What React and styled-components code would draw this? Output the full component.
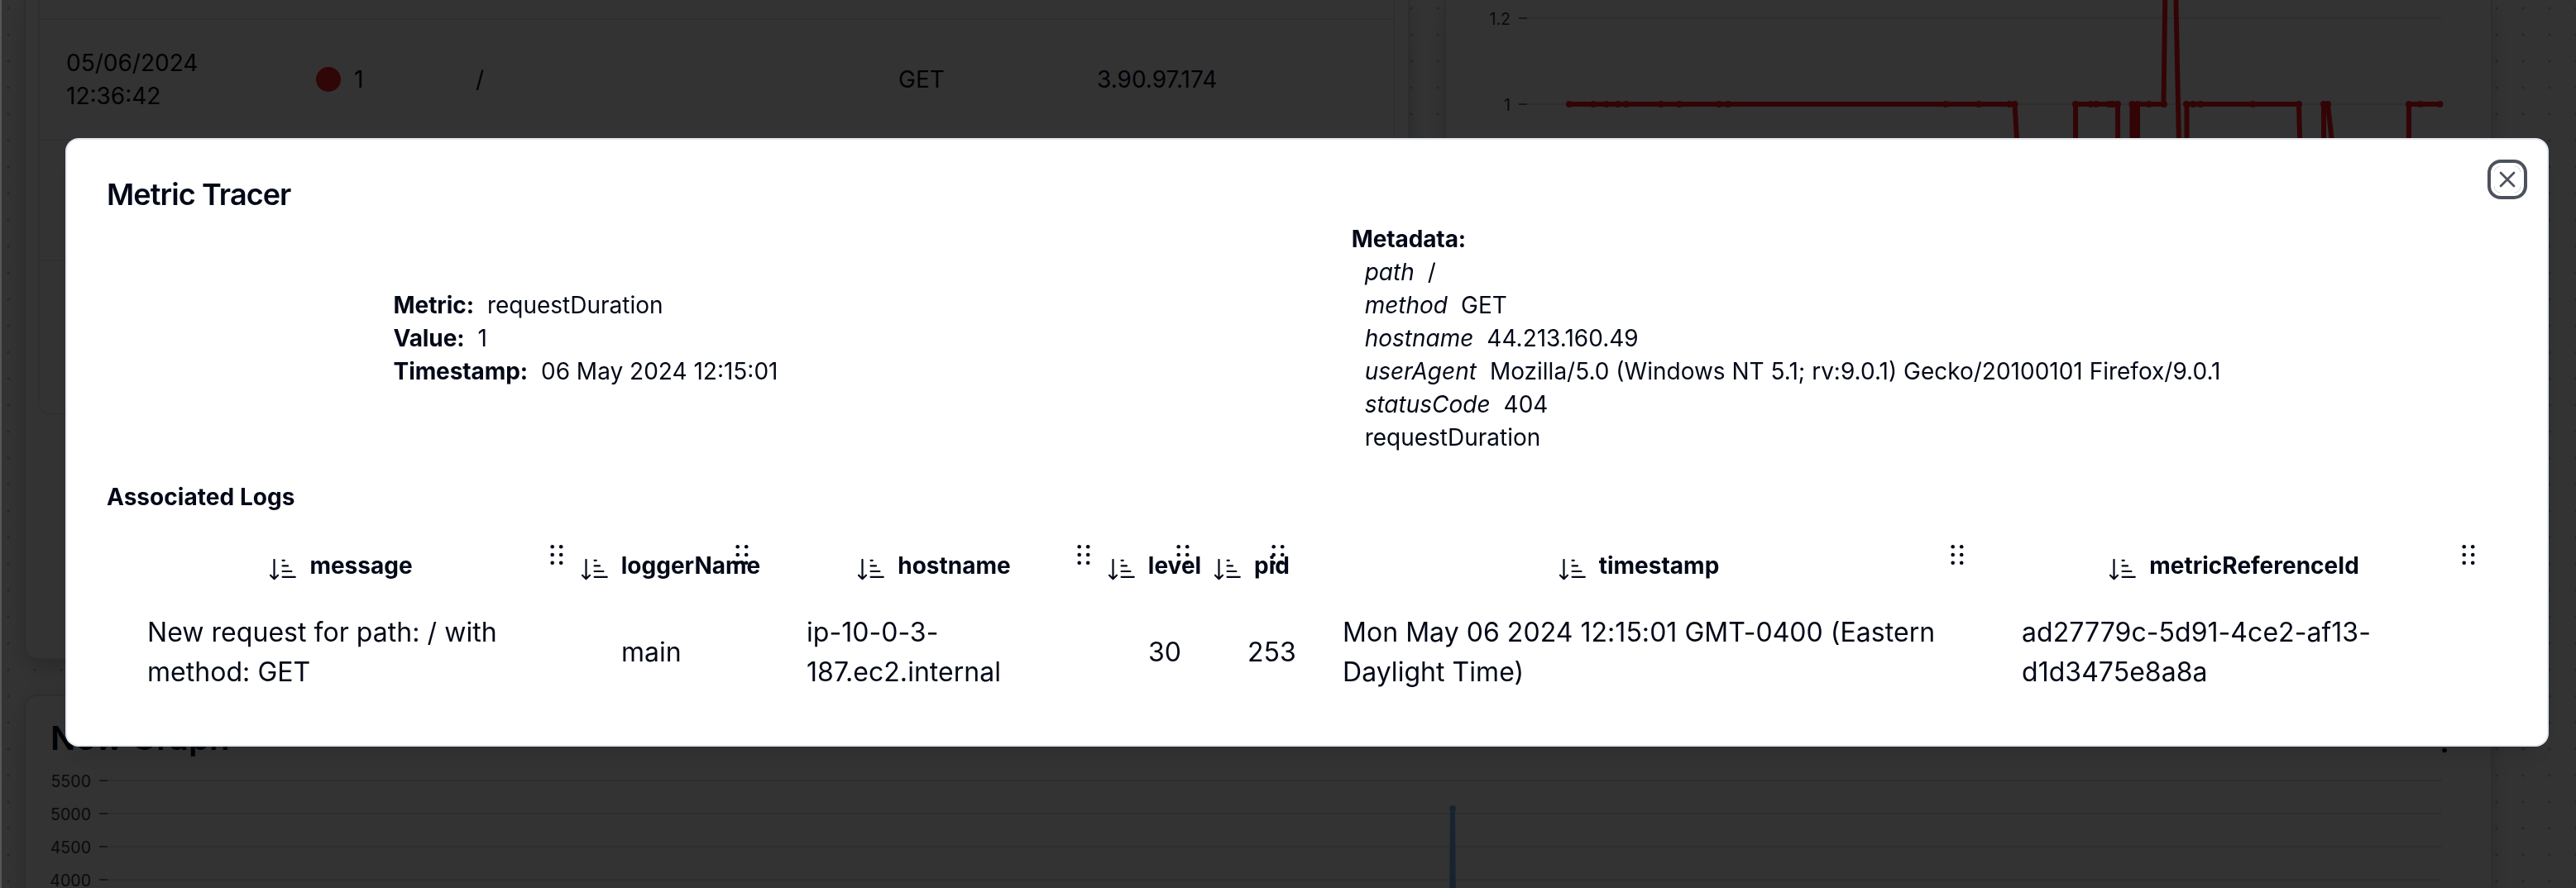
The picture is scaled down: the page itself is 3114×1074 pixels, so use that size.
import React from "react";
import styled, { createGlobalStyle } from "styled-components";

const GlobalStyle = createGlobalStyle`
  *, *::before, *::after { box-sizing: border-box; }
  body {
    margin: 0;
    font-family: Inter, "Liberation Sans", sans-serif;
    color: #020817;
    background: #fff;
    overflow: hidden;
  }
`;

/* ---------- dashboard behind the dialog ---------- */

const Dashboard = styled.main`
  width: 3114px;
  height: 1074px;
  overflow: hidden;
  padding-left: 29px;
  display: flex;
  flex-direction: column;
  gap: 42px;
  background-color: #fff;
  background-image: radial-gradient(circle at 10px 10px, #c4c4c4 1.1px, transparent 2px);
  background-size: 32px 32px;
`;

const WidgetRow = styled.div`
  display: flex;
  gap: 42px;
`;

const Card = styled.section`
  flex: none;
  width: ${(p) => p.$width}px;
  height: ${(p) => p.$height}px;
  background: #fff;
  border: 2px solid #dcdee2;
  border-top-width: ${(p) => (p.$cut ? 0 : 2)}px;
  border-radius: ${(p) => (p.$cut ? "0 0 16px 16px" : "16px")};
  box-shadow: 0 20px 30px -6px rgba(0, 0, 0, 0.14), 0 0 24px rgba(0, 0, 0, 0.1);
  overflow: hidden;
`;

const RequestTable = styled.div`
  margin: 0 16px 0 15px;
  height: 502px;
  border: 2px solid #e9ebee;
  border-top: 0;
  border-radius: 0 0 16px 16px;
`;

const RequestRow = styled.div`
  height: ${(p) => p.$height}px;
  border-bottom: 2px solid #e9ebee;
  display: grid;
  grid-template-columns: 302px 193px 511px 240px 1fr;
  align-items: center;
  font-size: 28px;
  line-height: 40px;
`;

const RequestCell = styled.div`
  padding: 0 32px;
  display: flex;
  align-items: center;
  gap: 16px;
`;

const DateText = styled.span`
  width: 170px;
`;

const StatusDot = styled.span`
  width: 30px;
  height: 30px;
  border-radius: 50%;
  background: #f01e24;
`;

const GraphHeader = styled.header`
  display: flex;
  justify-content: space-between;
  align-items: center;
  padding: 27px 52px 0 30px;
  height: 96px;
`;

const GraphTitle = styled.h2`
  margin: -21px 0 0;
  font-size: 40px;
  line-height: 48px;
  font-weight: 600;
  letter-spacing: 0.2px;
`;

const Chart = styled.svg`
  display: block;
  overflow: visible;
  font-family: Inter, sans-serif;
  font-size: 19.6px;
`;

/* ---------- dialog ---------- */

const Overlay = styled.div`
  position: fixed;
  inset: 0 0 0 2px;
  background: rgba(0, 0, 0, 0.8);
  padding: 167px 0 0 77px;
`;

const Edge = styled.div`
  position: fixed;
  inset: 0 auto 0 0;
  width: 2px;
  background: #565656;
`;

const Dialog = styled.div`
  position: relative;
  width: 3002px;
  height: 736px;
  padding: 48px;
  background: #fff;
  border: 2px solid #e2e8f0;
  border-radius: 16px;
  box-shadow: 0 20px 30px -6px rgba(0, 0, 0, 0.1), 0 8px 12px -8px rgba(0, 0, 0, 0.1);
`;

const CloseButton = styled.button`
  position: absolute;
  top: 32px;
  right: 32px;
  width: 32px;
  height: 32px;
  padding: 0;
  border: 0;
  border-radius: 8px;
  background: transparent;
  color: #020817;
  opacity: 0.7;
  box-shadow: 0 0 0 4px #fff, 0 0 0 8px #020817;

  svg { display: block; }
`;

const Title = styled.h1`
  margin: 0 0 16px;
  font-size: 36px;
  line-height: 36px;
  font-weight: 600;
  letter-spacing: -0.025em;
`;

const Details = styled.div`
  display: flex;
  justify-content: space-around;
  align-items: center;
  font-size: 28px;
  line-height: 40px;
`;

const Line = styled.div`
  display: flex;
  gap: 16px;
  padding-left: ${(p) => (p.$indent ? 16 : 0)}px;
  white-space: nowrap;
`;

const Label = styled.span`
  font-weight: 700;
  letter-spacing: -0.1px;
`;

const MetaKey = styled.em`
  font-style: italic;
`;

const SectionTitle = styled.div`
  margin: 32px 0 16px;
  font-size: 28px;
  line-height: 40px;
  font-weight: 700;
  letter-spacing: 0.05px;
`;

const LogGrid = styled.div`
  display: grid;
  grid-template-columns: 573px 224px 413px 120px 115px 821px 618px;
`;

const HeadCell = styled.div`
  position: relative;
  height: 88px;
  padding: 5px 6px 0 0;
  display: flex;
  align-items: center;
  justify-content: center;
  gap: 16px;
  font-size: 28px;
  line-height: 40px;
  font-weight: 700;
  white-space: nowrap;
`;

const SortGlyph = styled.svg`
  flex: none;
  margin-top: 10px;
`;

const Grip = styled.svg`
  position: absolute;
  top: 20px;
  right: 21px;
`;

const LogCell = styled.div`
  height: 128px;
  padding: 0 47px 0 49px;
  display: flex;
  align-items: center;
  font-size: 32px;
  line-height: 48px;
  letter-spacing: 0.04px;
`;

const SortIcon = () => (
  <SortGlyph width="32" height="26" viewBox="0 0 32 26" fill="none" stroke="currentColor" strokeWidth="2.2" strokeLinecap="round" strokeLinejoin="round">
    <path d="M5.5 1v23M1 19.7l4.5 4.5 4.5-4.5M15.6 1.8h2.2M15.6 8.4h6.4M15.6 15h10.8M15.6 21.8h15.2" />
  </SortGlyph>
);

const GripDots = () => (
  <Grip width="16" height="26" viewBox="0 0 16 26" fill="currentColor">
    {[4.3, 14, 23.7].map((y) => (
      <g key={y}>
        <circle cx="2.7" cy={y} r="2.3" />
        <circle cx="13.2" cy={y} r="2.3" />
      </g>
    ))}
  </Grip>
);

const columns = [
  ["message", "New request for path: / with method: GET"],
  ["loggerName", "main"],
  ["hostname", "ip-10-0-3-187.ec2.internal"],
  ["level", "30"],
  ["pid", "253"],
  ["timestamp", "Mon May 06 2024 12:15:01 GMT-0400 (Eastern Daylight Time)"],
  ["metricReferenceId", "ad27779c-5d91-4ce2-af13-d1d3475e8a8a"],
];

const metadata = [
  ["path", "/"],
  ["method", "GET"],
  ["hostname", "44.213.160.49"],
  ["userAgent", "Mozilla/5.0 (Windows NT 5.1; rv:9.0.1) Gecko/20100101 Firefox/9.0.1"],
  ["statusCode", "404"],
];

const markers = [
  1897, 1926, 1942, 1956, 1966, 2008, 2030, 2078, 2089, 2352, 2392, 2429, 2435.5,
  2509, 2527, 2534, 2549.5, 2554, 2560, 2577.5, 2584, 2598, 2616, 2643, 2651, 2660,
  2723, 2779, 2809, 2814, 2912, 2926, 2949.5,
];

const StatusChart = () => (
  <Chart width="1263" height="200" viewBox="1748 0 1263 200">
    {[["1.2", 22], ["1", 126]].map(([label, y]) => (
      <g key={label}>
        <line x1="1846" x2="2952" y1={y} y2={y} stroke="#e3e3e3" strokeWidth="2" />
        <line x1="1836" x2="1846" y1={y} y2={y} stroke="#777" strokeWidth="2" />
        <text x="1826" y={y + 7.5} textAnchor="end" fill="#333">{label}</text>
      </g>
    ))}
    <path
      d="M1897 126H2435.5L2447 320M2509 320V126H2560L2560.5 320M2577 320L2577.5 126H2583L2580 320M2584 320V126H2615.5L2617.5-20M2630-20L2637 320M2643.5 320V126H2779L2784 320M2809 320V126H2814L2835 320M2912 320V126H2949.5"
      fill="none"
      stroke="#ff1822"
      strokeWidth="6"
    />
    {markers.map((x) => <circle key={x} cx={x} cy="126" r="4" fill="#ff1822" />)}
  </Chart>
);

const NewGraphChart = () => (
  <Chart width="2980" height="136" viewBox="31 938 2980 136">
    {[5500, 5000, 4500, 4000].map((value, i) => {
      const y = 944 + i * 40;
      return (
        <g key={value}>
          <line x1="130" x2="2952" y1={y} y2={y} stroke="#e3e3e3" strokeWidth="2" />
          <line x1="120" x2="130" y1={y} y2={y} stroke="#777" strokeWidth="2" />
          <text x="110" y={y + 7.5} textAnchor="end" fill="#333">{value}</text>
        </g>
      );
    })}
    <path d="M1754.6 1160L1756 978L1757.4 1160" fill="none" stroke="#7ab0ee" strokeWidth="6" strokeLinejoin="round" />
    <circle cx="1756" cy="978" r="4" fill="#7ab0ee" />
  </Chart>
);

export default function App() {
  return (
    <>
      <GlobalStyle />
      <Dashboard>
        <WidgetRow>
          <Card $width={1675} $height={798} $cut>
            <RequestTable>
              <RequestRow $height={24} />
              <RequestRow $height={146}>
                <RequestCell><DateText>05/06/2024 12:36:42</DateText></RequestCell>
                <RequestCell><StatusDot />1</RequestCell>
                <RequestCell>/</RequestCell>
                <RequestCell>GET</RequestCell>
                <RequestCell>3.90.97.174</RequestCell>
              </RequestRow>
              <RequestRow $height={146} />
            </RequestTable>
          </Card>
          <Card $width={1267} $height={798} $cut>
            <StatusChart />
          </Card>
        </WidgetRow>
        <Card $width={2984} $height={300}>
          <GraphHeader>
            <GraphTitle>New Graph</GraphTitle>
            <svg width="8" height="32" viewBox="0 0 8 32" fill="#020817">
              <circle cx="4" cy="3" r="2.8" />
              <circle cx="4" cy="11" r="2.8" />
              <circle cx="4" cy="19.5" r="2.8" />
            </svg>
          </GraphHeader>
          <NewGraphChart />
        </Card>
      </Dashboard>

      <Overlay>
        <Dialog role="dialog">
          <Title>Metric Tracer</Title>
          <Details>
            <div>
              <Line><Label>Metric:</Label><span>requestDuration</span></Line>
              <Line><Label>Value:</Label><span>1</span></Line>
              <Line><Label>Timestamp:</Label><span>06 May 2024 12:15:01</span></Line>
            </div>
            <div>
              <Line><Label>Metadata:</Label></Line>
              {metadata.map(([key, value]) => (
                <Line key={key} $indent><MetaKey>{key}</MetaKey><span>{value}</span></Line>
              ))}
              <Line $indent>requestDuration</Line>
            </div>
          </Details>
          <SectionTitle>Associated Logs</SectionTitle>
          <LogGrid>
            {columns.map(([name]) => (
              <HeadCell key={name}>
                <SortIcon />
                <span>{name}</span>
                <GripDots />
              </HeadCell>
            ))}
            {columns.map(([name, value]) => (
              <LogCell key={name}><span>{value}</span></LogCell>
            ))}
          </LogGrid>
          <CloseButton aria-label="Close">
            <svg width="32" height="32" viewBox="0 0 24 24" fill="none" stroke="currentColor" strokeWidth="2" strokeLinecap="round">
              <path d="M18 6 6 18M6 6l12 12" />
            </svg>
          </CloseButton>
        </Dialog>
      </Overlay>
      <Edge />
    </>
  );
}
